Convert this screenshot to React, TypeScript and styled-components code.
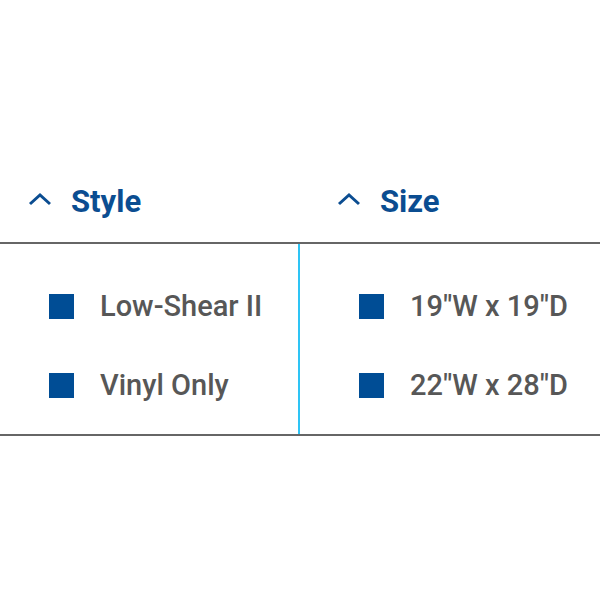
import styled, { createGlobalStyle } from "styled-components";

const GlobalStyle = createGlobalStyle`
  html, body {
    margin: 0;
    padding: 0;
    background: #ffffff;
    font-family: Roboto, "Liberation Sans", sans-serif;
  }
`

const Page = styled.div`
  width: 600px;
  height: 600px;
  padding-top: 186px;
  box-sizing: border-box;
  overflow: hidden;
`

const HeadRow = styled.div`
  display: grid;
  grid-template-columns: 300px 1fr;
  padding-bottom: 25px;
  border-bottom: 2px solid #666666;
`

const Heading = styled.div<{ $inset: number }>`
  display: flex;
  align-items: center;
  gap: 19px;
  padding-left: ${p => p.$inset}px;
  color: #0b4d91;
  font-size: 31px;
  font-weight: 700;
  line-height: 1;
`

const Chevron = styled.svg`
  width: 24px;
  height: 14px;
  flex: none;
  margin-top: -6px;
`

const Body = styled.div`
  display: grid;
  grid-template-columns: 300px 1fr;
  border-bottom: 2px solid #666666;
`

const Column = styled.ul<{ $inset: number; $divider?: boolean }>`
  list-style: none;
  margin: 0;
  padding: 50px 0 36px ${p => p.$inset}px;
  display: flex;
  flex-direction: column;
  gap: 54px;
  border-right: ${p => (p.$divider ? "2px solid #2ec4f5" : "none")};
`

const Option = styled.li`
  display: flex;
  align-items: center;
  gap: 26px;
  height: 25px;
  color: #575757;
  font-size: 29px;
  font-weight: 500;
  line-height: 1;
  white-space: nowrap;
`

const Box = styled.span`
  width: 25px;
  height: 25px;
  flex: none;
  background: #004d95;
`

const ChevronUp = () => (
  <Chevron viewBox="0 0 24 14">
    <polyline points="2,12 12,3 22,12" fill="none" stroke="#0b4d91" strokeWidth="3" />
  </Chevron>
)

const groups = [
  { title: "Style", head: 28, list: 49, options: ["Low-Shear II", "Vinyl Only"] },
  { title: "Size", head: 37, list: 59, options: ['19"W x 19"D', '22"W x 28"D'] },
]

export default function App() {
  return (
    <>
      <GlobalStyle />
      <Page>
        <HeadRow>
          {groups.map(g => (
            <Heading key={g.title} $inset={g.head}>
              <ChevronUp />
              {g.title}
            </Heading>
          ))}
        </HeadRow>
        <Body>
          {groups.map((g, i) => (
            <Column key={g.title} $inset={g.list} $divider={i === 0}>
              {g.options.map(o => (
                <Option key={o}>
                  <Box />
                  {o}
                </Option>
              ))}
            </Column>
          ))}
        </Body>
      </Page>
    </>
  )
}
